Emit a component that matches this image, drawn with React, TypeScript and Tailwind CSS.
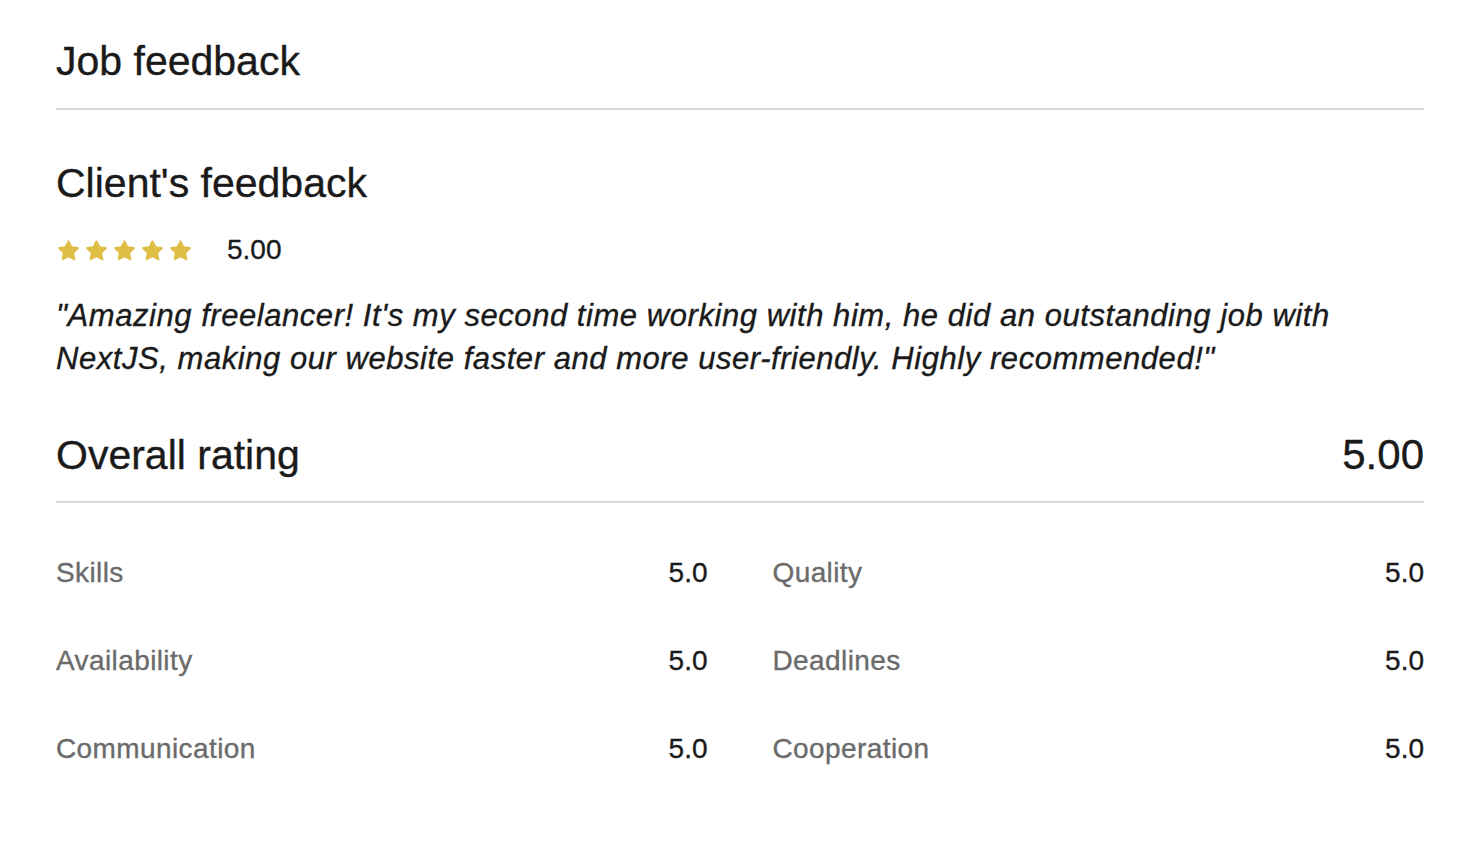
import React from 'react';

const Star: React.FC = () => (
  <svg viewBox="0 0 24 24" className="w-[25px] h-[25px]" fill="#dfbe46">
    <path d="M12 2.2c.4 0 .7.2.9.6l2.5 5.1 5.6.8c.9.1 1.2 1.2.6 1.8l-4.1 4 1 5.6c.2.9-.8 1.5-1.5 1.1L12 18.5l-5 2.7c-.8.4-1.7-.2-1.5-1.1l1-5.6-4.1-4c-.6-.6-.3-1.7.6-1.8l5.6-.8 2.5-5.1c.2-.4.5-.6.9-.6z" />
  </svg>
);

const ratings: [string, string][][] = [
  [['Skills', '5.0'], ['Quality', '5.0']],
  [['Availability', '5.0'], ['Deadlines', '5.0']],
  [['Communication', '5.0'], ['Cooperation', '5.0']],
];

const App: React.FC = () => {
  return (
    <div
      className="min-h-[860px] bg-white px-[56px] pt-[37px] text-[#1a1a1a] [-webkit-text-stroke:0.35px_currentColor]"
      style={{ fontFamily: "'Liberation Sans', Arial, sans-serif" }}
    >
      <h1 className="text-[41px] leading-[48px] font-normal">Job feedback</h1>
      <div className="mt-[23px] h-[2px] bg-[#d9d9d9]" />

      <h2 className="mt-[49px] text-[41px] leading-[48px] font-normal">Client's feedback</h2>

      <div className="mt-[29px] flex h-[28px] items-center">
        <div className="flex gap-[3px]">
          <Star />
          <Star />
          <Star />
          <Star />
          <Star />
        </div>
        <span className="ml-[34px] text-[28px] leading-[28px]">5.00</span>
      </div>

      <p className="mt-[30px] text-[31px] leading-[43px] italic tracking-[0.55px]">
        "Amazing freelancer! It's my second time working with him, he did an outstanding job with NextJS, making our
        website faster and more user-friendly. Highly recommended!"
      </p>

      <div className="mt-[51px] flex items-center justify-between">
        <h2 className="text-[41px] leading-[48px] font-normal">Overall rating</h2>
        <span className="text-[42px] leading-[48px]">5.00</span>
      </div>
      <div className="mt-[22px] h-[2px] bg-[#d9d9d9]" />

      <div className="mt-[50px] flex flex-col gap-[48px]">
        {ratings.map((row, i) => (
          <div key={i} className="grid grid-cols-2 gap-x-[65px]">
            {row.map(([label, value]) => (
              <div key={label} className="flex h-[40px] items-center justify-between text-[28px]">
                <span className="text-[#6b6b6b] tracking-[0.4px]">{label}</span>
                <span className="text-[#1a1a1a]">{value}</span>
              </div>
            ))}
          </div>
        ))}
      </div>
    </div>
  );
};

export default App;
